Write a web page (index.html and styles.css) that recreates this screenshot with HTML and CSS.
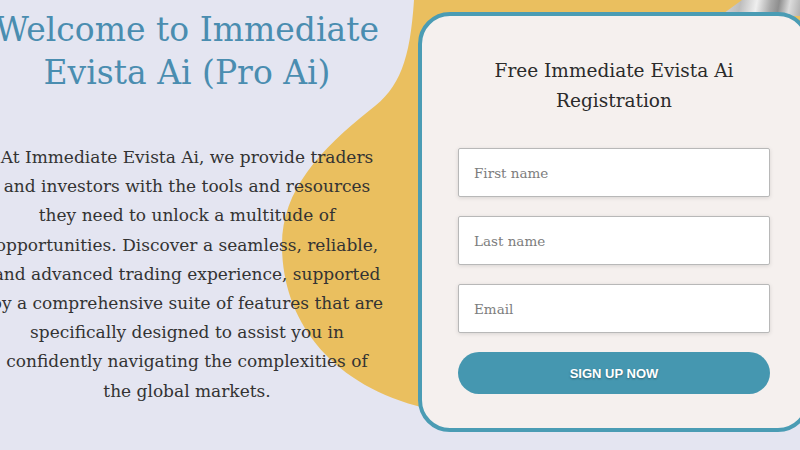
FILE: index.html
```html
<!DOCTYPE html>
<html lang="en">
<head>
<meta charset="utf-8">
<title>Immediate Evista Ai</title>
<link rel="stylesheet" href="styles.css">
</head>
<body>
<div class="backdrop" aria-hidden="true">
  <svg class="blob" width="800" height="450" viewBox="0 0 800 450">
    <path d="M414,0 C410,60 400,88 370,110 C320,150 282,190 282,245 C282,320 330,385 425,408 L800,408 L800,0 Z" fill="#eabf5f"/>
  </svg>
  <div class="marble"></div>
</div>
<main class="page">
  <section class="intro">
    <h1 class="intro-title">Welcome to Immediate Evista Ai (Pro Ai)</h1>
    <p class="intro-text">At Immediate Evista Ai, we provide traders and investors with the tools and resources they need to unlock a multitude of opportunities. Discover a seamless, reliable, and advanced trading experience, supported by a comprehensive suite of features that are specifically designed to assist you in confidently navigating the complexities of the global markets.</p>
  </section>
  <form class="card">
    <h2 class="card-title">Free Immediate Evista Ai Registration</h2>
    <input class="field" type="text" placeholder="First name">
    <input class="field" type="text" placeholder="Last name">
    <input class="field" type="email" placeholder="Email">
    <button class="submit" type="button">SIGN UP NOW</button>
  </form>
</main>
</body>
</html>
```

FILE: styles.css
```css
html, body {
  margin: 0;
  padding: 0;
}
body {
  width: 800px;
  height: 450px;
  overflow: hidden;
  background: #e4e5f1;
  position: relative;
  font-family: "DejaVu Serif", Georgia, serif;
}
.backdrop {
  position: absolute;
  inset: 0;
  z-index: 0;
}
.blob {
  position: absolute;
  left: 0;
  top: 0;
}
.marble {
  position: absolute;
  right: 0;
  top: 0;
  width: 80px;
  height: 16px;
  clip-path: polygon(22px 0, 100% 0, 100% 100%, 0 100%);
  background: linear-gradient(100deg, #d8d8d8 0%, #bdbdbd 25%, #efefef 45%, #a9a9a9 62%, #8e8e8e 72%, #dcdcdc 85%, #b0b0b0 100%);
}
.page {
  position: relative;
  z-index: 1;
  display: grid;
  grid-template-columns: 400px 392px;
  column-gap: 31px;
  margin-left: -13px;
  padding-top: 12px;
}
.intro {
  text-align: center;
  padding: 0 4px;
}
.intro-title {
  margin: -4px 0 0;
  font-weight: normal;
  font-size: 33px;
  line-height: 43px;
  color: #4a8db0;
}
.intro-text {
  margin: 49px 0 0;
  font-size: 17px;
  line-height: 29.2px;
  color: #333;
}
.card {
  box-sizing: border-box;
  height: 420px;
  border: 4px solid #4a9cb4;
  border-radius: 32px;
  background: #f5f0ee;
  padding: 40px 36px 0;
  display: flex;
  flex-direction: column;
}
.card-title {
  margin: 0 0 32px;
  font-weight: normal;
  font-size: 18.5px;
  line-height: 30px;
  color: #2b2b2b;
  text-align: center;
  padding: 0 16px;
}
.field {
  box-sizing: border-box;
  height: 49px;
  margin: 0 0 19px;
  border: 1px solid #b8b8b8;
  border-radius: 2px;
  background: #fff;
  box-shadow: 0 1px 4px rgba(0,0,0,0.12);
  padding: 0 15px;
  font-family: "DejaVu Serif", Georgia, serif;
  font-size: 13.5px;
  color: #333;
}
.field::placeholder {
  color: #7d7d7d;
}
.submit {
  height: 42px;
  border: 0;
  border-radius: 21px;
  background: #4597b0;
  color: #fff;
  font-family: "Liberation Sans", Arial, sans-serif;
  font-weight: bold;
  font-size: 13px;
  text-shadow: 0 1px 2px rgba(0,0,0,0.35);
  cursor: pointer;
}
```
